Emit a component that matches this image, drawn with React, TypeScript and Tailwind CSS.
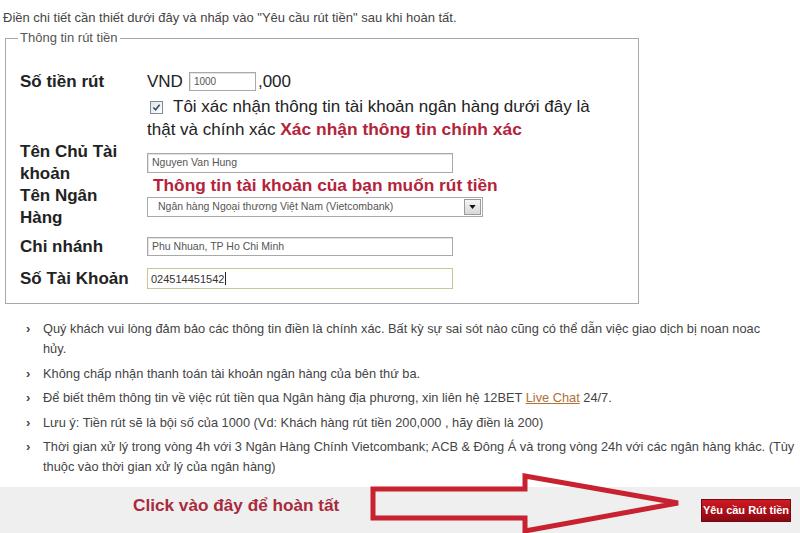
import type { ReactNode } from "react";

const NOTES: ReactNode[] = [
  <>
    Quý khách vui lòng đảm bảo các thông tin điền là chính xác. Bất kỳ sự sai sót nào cũng có thể dẫn việc giao dịch bị noan noac
    <br />
    hủy.
  </>,
  <>Không chấp nhận thanh toán tài khoản ngân hàng của bên thứ ba.</>,
  <>
    Để biết thêm thông tin về việc rút tiền qua Ngân hàng địa phương, xin liên hệ 12BET{" "}
    <span className="text-[#b0703a] underline">Live Chat</span> 24/7.
  </>,
  <>Lưu ý: Tiền rút sẽ là bội số của 1000 (Vd: Khách hàng rút tiền 200,000 , hãy điền là 200)</>,
  <>
    Thời gian xử lý trong vòng 4h với 3 Ngân Hàng Chính Vietcombank; ACB &amp; Đông Á và trong vòng 24h với các ngân hàng khác. (Tùy
    <br />
    thuộc vào thời gian xử lý của ngân hàng)
  </>,
];

function TextBox({ value, className = "" }: { value: string; className?: string }) {
  return (
    <div
      className={`flex items-center border border-[#a9a9a9] bg-white pl-[4px] text-[10.5px] text-[#555] shadow-[inset_1px_1px_0_#e3e3e3] ${className}`}
    >
      {value}
    </div>
  );
}

function CheckBox() {
  return (
    <span className="mr-[10px] inline-flex h-[13px] w-[13px] shrink-0 items-center justify-center border border-[#7d8a98] bg-gradient-to-br from-[#dfe3e8] to-white">
      <svg viewBox="0 0 10 10" className="h-[9px] w-[9px]">
        <path d="M1.5 5 L4 7.5 L8.5 2" fill="none" stroke="#3a4a6a" strokeWidth="1.8" />
      </svg>
    </span>
  );
}

export default function App() {
  return (
    <div className="flex h-[533px] w-[800px] flex-col overflow-hidden bg-white font-['Liberation_Sans',Arial,sans-serif] text-[#222]">
      <p className="pl-[3px] pt-[10px] text-[13px] leading-[16px] text-[#444]">
        Điền chi tiết cần thiết dưới đây và nhấp vào "Yêu cầu rút tiền" sau khi hoàn tất.
      </p>

      <fieldset className="ml-[5px] mt-[4px] w-[634px] border border-[#a8a8a8] pb-[16px] pl-[14px]">
        <legend className="-ml-[2px] px-[2px] text-[13px] leading-[16px] text-[#555]">Thông tin rút tiền</legend>

        {/* Số tiền rút */}
        <div className="mt-[23px] grid h-[22px] grid-cols-[127px_1fr] items-center">
          <span className="text-[17px] font-bold">Số tiền rút</span>
          <div className="flex items-center text-[17px]">
            <span>VND</span>
            <TextBox value="1000" className="ml-[6px] h-[19px] w-[67px] text-[10px]" />
            <span className="ml-[2px]">,000</span>
          </div>
        </div>

        {/* confirmation */}
        <div className="mt-[5px] grid grid-cols-[127px_1fr] text-[17px] leading-[22px]">
          <span />
          <div>
            <div className="flex items-center pl-[3px]">
              <CheckBox />
              <span>Tôi xác nhận thông tin tài khoản ngân hàng dưới đây là</span>
            </div>
            <div>
              thật và chính xác{" "}
              <span className="text-[17.4px] font-bold text-[#b4233a]">Xác nhận thông tin chính xác</span>
            </div>
          </div>
        </div>

        {/* account holder + bank */}
        <div className="grid grid-cols-[127px_1fr]">
          <div className="text-[17px] font-bold leading-[22px]">
            <div>
              Tên Chủ Tài
              <br />
              khoản
            </div>
            <div>
              Tên Ngân
              <br />
              Hàng
            </div>
          </div>
          <div className="flex flex-col">
            <TextBox value="Nguyen Van Hung" className="mt-[12px] h-[20px] w-[306px]" />
            <div className="pl-[6px] text-[17.3px] font-bold leading-[24px] text-[#b4233a]">
              Thông tin tài khoản của bạn muốn rút tiền
            </div>
            <div className="flex h-[20px] w-[336px] items-center border border-[#a9a9a9] bg-white text-[10.5px] text-[#555]">
              <span className="flex-1 pl-[10px]">Ngân hàng Ngoại thương Việt Nam (Vietcombank)</span>
              <span className="mr-[1px] flex h-[16px] w-[17px] items-center justify-center border border-[#9a9a9a] bg-gradient-to-b from-[#f4f4f4] to-[#d8d8d8]">
                <svg viewBox="0 0 8 5" className="h-[4px] w-[7px]">
                  <path d="M0 0 H8 L4 5 Z" fill="#111" />
                </svg>
              </span>
            </div>
          </div>
        </div>

        {/* branch */}
        <div className="mt-[5px] grid h-[20px] grid-cols-[127px_1fr] items-center">
          <span className="text-[17px] font-bold">Chi nhánh</span>
          <TextBox value="Phu Nhuan, TP Ho Chi Minh" className="h-[19px] w-[306px]" />
        </div>

        {/* account number */}
        <div className="mt-[12px] grid h-[21px] grid-cols-[127px_1fr] items-center">
          <span className="text-[17px] font-bold">Số Tài Khoản</span>
          <div className="flex h-[21px] w-[306px] items-center border border-[#c9c79a] bg-white pl-[3px] text-[11px] text-[#333]">
            024514451542
            <span className="ml-[1px] h-[13px] w-px bg-[#222]" />
          </div>
        </div>
      </fieldset>

      <ul className="mt-[15px] flex flex-col gap-[4.5px] text-[12.8px] leading-[20px] text-[#444]">
        {NOTES.map((note, i) => (
          <li key={i} className="flex whitespace-nowrap">
            <span className="w-[43px] shrink-0 pl-[26px] text-[13px] font-bold">›</span>
            <span>{note}</span>
          </li>
        ))}
      </ul>

      <div className="mt-auto flex h-[46px] shrink-0 items-start bg-[#efefef]">
        <span className="ml-[133px] mt-[7px] w-[235px] shrink-0 whitespace-nowrap text-[17.2px] font-bold leading-[22px] text-[#a82a3c]">
          Click vào đây để hoàn tất
        </span>
        <svg viewBox="0 0 316 60" className="-mt-[14px] h-[60px] w-[316px] shrink-0">
          <path
            d="M5 16 H157 V3 L310 30 L157 58 V45 H5 Z"
            fill="none"
            stroke="#c8212f"
            strokeWidth="5"
            strokeLinejoin="miter"
          />
        </svg>
        <button className="ml-[17px] mt-[12px] flex h-[23px] w-[90px] shrink-0 items-center justify-center border border-[#6e0a12] bg-gradient-to-b from-[#d01a24] to-[#8c0812] text-[11px] font-bold text-white">
          Yêu cầu Rút tiền
        </button>
      </div>
    </div>
  );
}
